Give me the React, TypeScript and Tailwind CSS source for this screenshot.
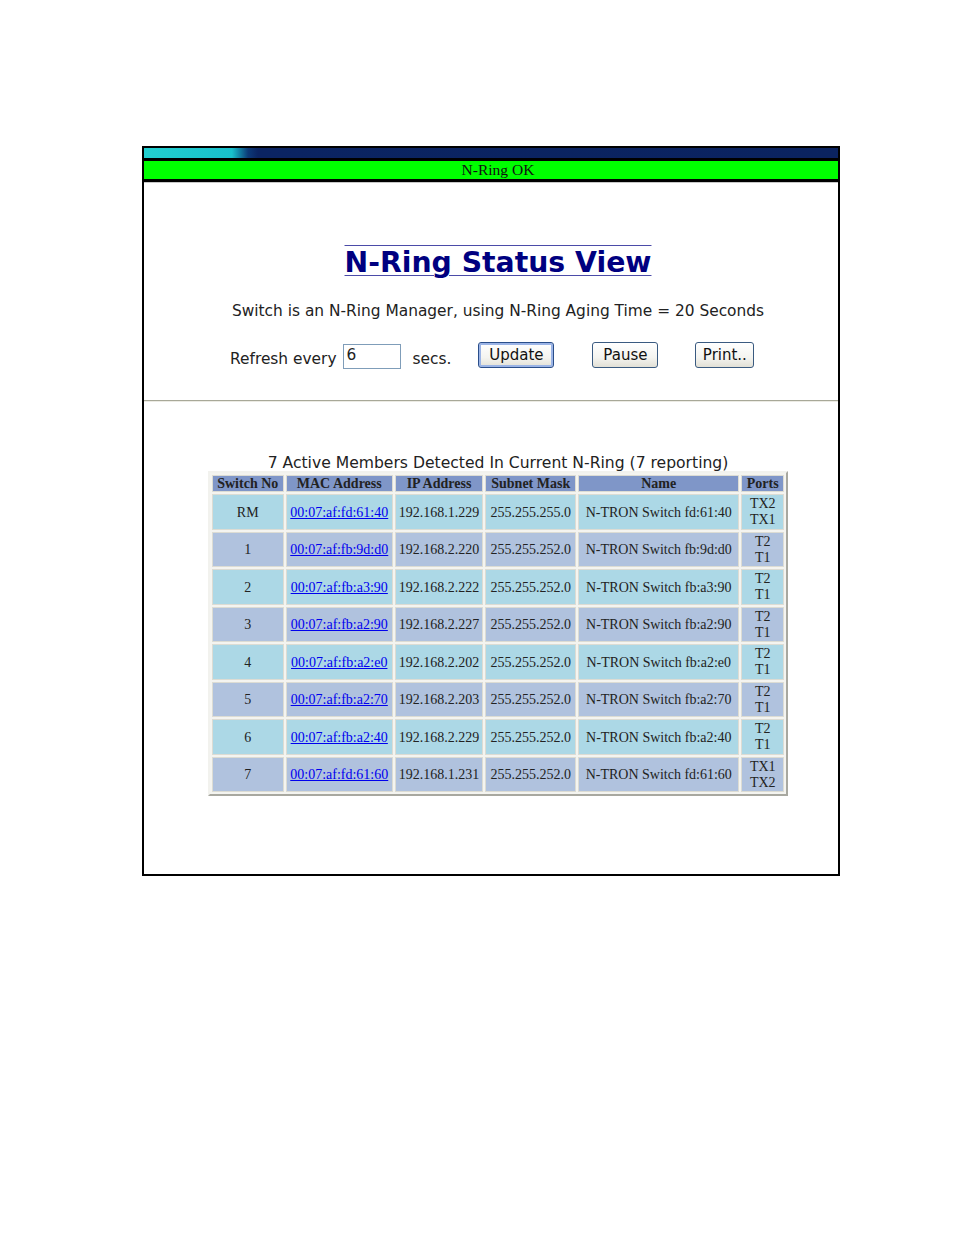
import React from "react";

const rows = [
  ["RM", "00:07:af:fd:61:40", "192.168.1.229", "255.255.255.0", "N-TRON Switch fd:61:40", "TX2", "TX1"],
  ["1", "00:07:af:fb:9d:d0", "192.168.2.220", "255.255.252.0", "N-TRON Switch fb:9d:d0", "T2", "T1"],
  ["2", "00:07:af:fb:a3:90", "192.168.2.222", "255.255.252.0", "N-TRON Switch fb:a3:90", "T2", "T1"],
  ["3", "00:07:af:fb:a2:90", "192.168.2.227", "255.255.252.0", "N-TRON Switch fb:a2:90", "T2", "T1"],
  ["4", "00:07:af:fb:a2:e0", "192.168.2.202", "255.255.252.0", "N-TRON Switch fb:a2:e0", "T2", "T1"],
  ["5", "00:07:af:fb:a2:70", "192.168.2.203", "255.255.252.0", "N-TRON Switch fb:a2:70", "T2", "T1"],
  ["6", "00:07:af:fb:a2:40", "192.168.2.229", "255.255.252.0", "N-TRON Switch fb:a2:40", "T2", "T1"],
  ["7", "00:07:af:fd:61:60", "192.168.1.231", "255.255.252.0", "N-TRON Switch fd:61:60", "TX1", "TX2"],
];

const headers = [
  ["Switch No", "w-[72px]"],
  ["MAC Address", "w-[107px]"],
  ["IP Address", "w-[87px]"],
  ["Subnet Mask", "w-[91px]"],
  ["Name", "w-[161px]"],
  ["Ports", "w-[43px]"],
];

const cell = "border border-[#dcdcd4] text-center px-[3px] py-0 whitespace-nowrap";

function Btn({ label, focus, w }: { label: string; focus?: boolean; w: string }) {
  return (
    <button
      className={`${w} h-[26px] rounded-[3px] border text-[15px] leading-none text-[#111] bg-[linear-gradient(to_bottom,#ffffff_0%,#f4f4f0_60%,#e2e0d6_100%)] ${
        focus
          ? "border-[#2a4e8a] shadow-[inset_0_0_0_2px_#9bb4e6]"
          : "border-[#3a5a80]"
      }`}
      style={{ fontFamily: '"DejaVu Sans", Verdana, sans-serif' }}
    >
      {label}
    </button>
  );
}

export default function App() {
  return (
    <div className="w-[954px] h-[1235px] bg-white pt-[146px] pl-[142px]">
      <div className="w-[698px] h-[730px] border-2 border-black flex flex-col bg-white">
        <div className="h-[10px] bg-[linear-gradient(to_right,#22d0d0_0px,#18c0cc_88px,#0c3a78_104px,#0b2462_114px,#0b2360_100%)]" />
        <div className="h-[3px] bg-black" />
        <div
          className="h-[18px] bg-[#00ff00] flex items-center justify-center pl-[14px] text-[15.5px] text-[#111]"
          style={{ fontFamily: '"Liberation Serif", "Times New Roman", serif' }}
        >
          N-Ring OK
        </div>
        <div className="h-[3px] bg-black" />
        <div className="h-[1px] bg-[#c8c8c8]" />

        <div
          className="flex flex-col items-center pl-[14px] text-[#222]"
          style={{ fontFamily: '"DejaVu Sans", Verdana, sans-serif' }}
        >
          <h1 className="mt-[63px] text-[28.3px] leading-[34px] font-bold text-[#000080] [text-decoration-line:underline_overline] decoration-[#4b4ba8] decoration-[1px] underline-offset-[3px]">
            N-Ring Status View
          </h1>
          <p className="mt-[22px] text-[15.4px] leading-[18px]">
            Switch is an N-Ring Manager, using N-Ring Aging Time = 20 Seconds
          </p>
          <div className="mt-[22px] flex items-start text-[15.4px] w-full pl-[72px]">
            <span className="mt-[8px] leading-[18px]">Refresh every</span>
            <div className="ml-[6px] mt-[2px] w-[58px] h-[25px] border border-[#7f9db9] text-[15.4px] leading-[20px] pl-[3px]">
              6
            </div>
            <span className="ml-[12px] mt-[8px] leading-[18px]">secs.</span>
            <div className="ml-[27px]">
              <Btn label="Update" focus w="w-[76px]" />
            </div>
            <div className="ml-[38px]">
              <Btn label="Pause" w="w-[66px]" />
            </div>
            <div className="ml-[37px]">
              <Btn label="Print.." w="w-[59px]" />
            </div>
          </div>
        </div>

        <div className="mt-[31px] h-[2px] border-t border-t-[#a8a898] border-b border-b-[#ecebe4]" />

        <div className="flex flex-col items-center pl-[14px]" style={{ fontFamily: '"DejaVu Sans", Verdana, sans-serif' }}>
          <p className="mt-[52px] text-[15.6px] leading-[18px] text-[#222]">
            7 Active Members Detected In Current N-Ring (7 reporting)
          </p>
          <table
            className="-mt-[1px] border-separate border-spacing-[2px] border-2 border-t-[#f2f2ee] border-l-[#f2f2ee] border-r-[#a8a8a0] border-b-[#a8a8a0] bg-[#f4f4f0] text-[14px] text-[#222]"
            style={{ fontFamily: '"Liberation Serif", "Times New Roman", serif' }}
          >
            <thead>
              <tr>
                {headers.map(([h, w]) => (
                  <th key={h} className={`${cell} ${w} h-[17px] leading-[15px] bg-[#7f96c8] font-bold`}>
                    {h}
                  </th>
                ))}
              </tr>
            </thead>
            <tbody>
              {rows.map((r, i) => (
                <tr key={r[0]} className={i % 2 === 0 ? "bg-[#acd8e6]" : "bg-[#b0c2de]"}>
                  <td className={`${cell} ${i % 2 === 0 ? "h-[36px]" : "h-[35px]"}`}>{r[0]}</td>
                  <td className={cell}>
                    <span className="text-[#0000ee] underline">{r[1]}</span>
                  </td>
                  <td className={cell}>{r[2]}</td>
                  <td className={cell}>{r[3]}</td>
                  <td className={cell}>{r[4]}</td>
                  <td className={`${cell} leading-[16px]`}>
                    {r[5]}
                    <br />
                    {r[6]}
                  </td>
                </tr>
              ))}
            </tbody>
          </table>
        </div>
      </div>
    </div>
  );
}
